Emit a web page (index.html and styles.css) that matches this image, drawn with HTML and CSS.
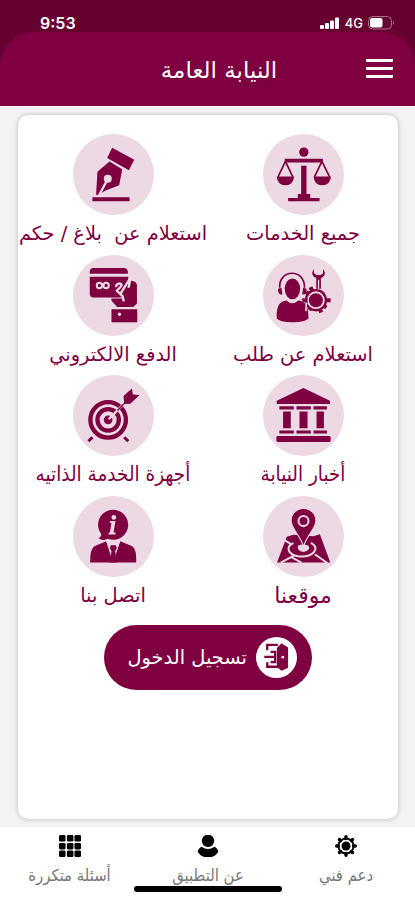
FILE: index.html
```html
<!DOCTYPE html>
<html lang="ar" dir="rtl">
<head>
  <meta charset="UTF-8" />
  <meta name="viewport" content="width=device-width, initial-scale=1.0" />
  <title>النيابة العامة</title>
  <link rel="stylesheet" href="styles.css">
</head>
<body>

<header id="top">
  <div class="status-bar">
    <span class="clock">9:53</span>
    <div class="status-icons">
      <svg width="20" height="13" viewBox="0 0 20 13">
        <rect x="0" y="8" width="4" height="4" rx="1" />
        <rect x="5" y="6" width="4" height="6" rx="1" />
        <rect x="10" y="3.500" width="4" height="8.500" rx="1" />
        <rect x="15" y="0.500" width="4" height="11.500" rx="1" />
      </svg>
      <span class="network">4G</span>
      <svg width="27" height="14" viewBox="0 0 27 14">
        <rect class="battery-case" x="0.500" y="0.500" width="23" height="12.500" rx="4" />
        <rect x="2" y="2" width="12.500" height="9.500" rx="2" />
        <path class="battery-tip" d="M25 4.500q2 2.300 0 4.600z" />
      </svg>
    </div>
  </div>
  <div class="title-bar">
    <div class="hamburger">
      <span></span>
      <span></span>
      <span></span>
    </div>
    <h1>النيابة العامة</h1>
  </div>
</header>

<main>
  <div class="card">
    <div class="services">
      <a class="service">
        <svg class="icon" viewBox="39 27 242 242">
          <circle cx="161" cy="81" r="14" />
          <path d="M104 101h114v11H104z" />
          <path d="M153 122h16v84h11v12h28v10h-94v-10h29v-12h10z" />
          <path class="line" d="M106 109L84 155M106 109L128 155M215 109L193 155M215 109L238 155" />
          <path d="M80 154h52q-2 26-26 26t-26-26zM190 154h52q-2 26-26 26t-26-26z" />
        </svg>
        <span class="label">جميع الخدمات</span>
      </a>
      <a class="service">
        <svg class="icon" viewBox="39 27 242 242">
          <path d="M156 68l66 36-16 31-65-36z" />
          <path d="M148 109l38 23-9 48-40 16-25 14-4-2 4-68z" />
          <path class="cut" d="M142 163l-25 47" />
          <circle class="hole" cx="143" cy="161" r="12" />
          <path d="M97 216h111v12H97z" />
        </svg>
        <span class="label">استعلام عن&nbsp; بلاغ / حكم</span>
      </a>
      <a class="service">
        <svg class="icon" viewBox="39 21 242 242">
          <path class="line" d="M89 119c-4-56 75-60 74 0" />
          <path d="M84 122l10-3 3 20h-6q-5-2-7-9zM169 122l-10-3-3 20h6q5-2 7-9z" />
          <ellipse cx="127" cy="122" rx="23" ry="31" />
          <path d="M109 157q17 16 36 0c21 3 30 15 30 54q-9 11-48 11t-47-11c-1-39 8-51 29-54z" />
          <path d="M190 62l-4 13c0 7 5 13 12 15v32h14V90c8-3 12-9 12-16l-5-12-1 14-7 5h-12l-7-5z" />
          <path class="slot" d="M205 95v27" />
          <path class="teeth" d="M181 117l32 76M157 156h84M177 185l42-54M168 132l60 46" />
          <circle class="hole" cx="197" cy="156" r="29" />
          <circle class="ring" cx="197" cy="156" r="30" />
          <circle cx="197" cy="156" r="21" />
          <path class="gap" d="M158 140l11 19-2 30" />
          <path d="M153 154l19-6v17z" />
        </svg>
        <span class="label">استعلام عن طلب</span>
      </a>
      <a class="service">
        <svg class="icon" viewBox="39 21 242 242">
          <path d="M89 77v-7q1-10 11-10h93q9 1 10 12v5z" />
          <path d="M89 86h115v63q-6 3-17-1H99q-9-1-10-10z" />
          <path d="M154 151h32l27-53q15 1 17 12v56l-11 10h-48l-17-18zM154 183h77v39h-77z" />
          <circle class="symbol" cx="118" cy="112" r="8" />
          <circle class="symbol" cx="138" cy="112" r="8" />
          <path class="finger" d="M168 117c-2-11 17-16 16-4l-14 15 17 16 4 16M182 135l24-39q5 8-2 23" />
          <circle class="hole" cx="178" cy="198" r="5" />
        </svg>
        <span class="label">الدفع الالكتروني</span>
      </a>
      <a class="service">
        <svg class="icon" viewBox="39 21 242 242">
          <path d="M160 60l79 38v10H80V98z" />
          <path d="M88 114h43v10H88zM139 114h43v10h-43zM190 114h40v10h-40zM99 130h23v50H99zM148 130h24v50h-24zM199 130h22v50h-22zM88 187h43v9H88zM139 187h43v9h-43zM190 187h40v9h-40z" />
          <rect x="79" y="203" width="162" height="18" rx="4" />
        </svg>
        <span class="label compact">أخبار النيابة</span>
      </a>
      <a class="service">
        <svg class="icon" viewBox="39 21 242 242">
          <circle class="target" cx="144" cy="155" r="53" />
          <circle class="target" cx="144" cy="155" r="32" />
          <circle cx="144" cy="155" r="13" />
          <path class="cut" d="M146 153l39-40" />
          <path class="shaft" d="M172 127l24-25" />
          <path d="M190 84l25-23 3 18 20 2-28 26-18 1z" />
          <path class="leg" d="M97 207l-12 12M192 207l12 12" />
        </svg>
        <span class="label compact">أجهزة الخدمة الذاتيه</span>
      </a>
      <a class="service">
        <svg class="icon" viewBox="39 16 242 242">
          <path d="M110 138l20-6 60 4 19-6 31 85H81z" />
          <path class="route" d="M92 215l38-20M130 157c-24 10-18 34 14 39 42 5 70-24 38-40M122 198l32 17M194 190l38 27M103 148l20 12" />
          <path class="hole" d="M143 165q15-8 32 0 8 14-15 18-20-2-17-18z" />
          <path class="pin" d="M160 167c-8-30-37-55-37-77a37 37 0 0 1 74 0c0 22-29 47-37 77z" />
          <circle class="pin-ring" cx="160" cy="91" r="15" />
        </svg>
        <span class="label wide">موقعنا</span>
      </a>
      <a class="service">
        <svg class="icon" viewBox="39 16 242 242">
          <path d="M115 142c6-3 9-6 8-13a45 45 0 1 1 20 15c-9 5-18 4-28-2z" />
          <path class="hole" d="M151 91h15l-6 34h6v6h-21v-5h4l5-29h-6z" />
          <circle class="hole" cx="161" cy="80" r="7" />
          <path d="M138 151l-35 15q-13 7-13 49h138q1-42-12-49l-36-15-20 60z" />
          <path class="hole" d="M138 150l20 65 22-65-20 8z" />
          <path d="M152 163h15l3 9-5 8 5 35h-21l5-35-5-8z" />
        </svg>
        <span class="label">اتصل بنا</span>
      </a>
    </div>

    <a class="login">
      <svg class="door" viewBox="0 0 124 124">
        <circle class="disc" cx="62" cy="62" r="62" />
        <path d="M63 33l14-14 20 13v61l-20 9-14-11z" />
        <path class="frame" d="M66 24H34v16M34 76v14h32M25 60h32M44 45h14v31H44" />
        <circle class="knob" cx="81" cy="61" r="4" />
      </svg>
      <span>تسجيل الدخول</span>
    </a>
  </div>
</main>

<nav>
  <a class="tab">
    <svg width="22" height="22" viewBox="0 0 64 64">
      <circle class="gear" cx="32" cy="32" r="22" />
      <circle cx="32" cy="32" r="13" />
      <path class="spikes" d="M32 5v5M32 54v5M5 32h5M54 32h5M13 13l3 3M48 48l3 3M51 13l-3 3M16 48l-3 3" />
    </svg>
    <span>دعم فني</span>
  </a>
  <a class="tab">
    <svg width="22" height="22" viewBox="0 0 64 64">
      <circle cx="32" cy="17" r="18" />
      <path d="M13 34q19 13 38 0 10 5 11 15-8 16-30 16T2 49q1-10 11-15z" />
    </svg>
    <span>عن التطبيق</span>
  </a>
  <a class="tab">
    <svg width="22" height="22" viewBox="0 0 64 64">
      <rect x="0" y="0" width="19" height="19" rx="4" />
      <rect x="23" y="0" width="19" height="19" rx="4" />
      <rect x="45" y="0" width="19" height="19" rx="4" />
      <rect x="0" y="23" width="19" height="19" rx="4" />
      <rect x="23" y="23" width="19" height="19" rx="4" />
      <rect x="45" y="23" width="19" height="19" rx="4" />
      <rect x="0" y="45" width="19" height="19" rx="4" />
      <rect x="23" y="45" width="19" height="19" rx="4" />
      <rect x="45" y="45" width="19" height="19" rx="4" />
    </svg>
    <span>أسئلة متكررة</span>
  </a>
  <div class="home-line"></div>
</nav>

</body>
</html>
```
FILE: styles.css
```css
* {
  box-sizing: border-box;
}

body {
  margin: 0;
  height: 900px;
  display: flex;
  flex-direction: column;
  overflow: hidden;
  background: #f3f3f3;
  color: #7e0040;
  font-family: "DejaVu Sans", sans-serif;
}

#top {
  height: 106px;
  background: #650030;
  color: white;
}

.status-bar {
  direction: ltr;
  height: 32px;
  padding: 7px 20px 0 40px;
  display: flex;
  justify-content: space-between;
  font-family: Inter, sans-serif;
}

.clock {
  font-size: 16px;
  line-height: 33px;
  height: 25px;
  font-weight: 600;
}

.status-icons {
  display: flex;
  align-items: center;
  gap: 5px;
  height: 18px;
  margin-top: 7px;
  fill: white;
}

.network {
  font-size: 13px;
  font-weight: 500;
}

.battery-case {
  fill: none;
  stroke: #a96f8d;
}

.battery-tip {
  fill: #a96f8d;
}

.title-bar {
  height: 74px;
  display: flex;
  background: #7e0040;
  border-radius: 34px 34px 0 0;
}

.hamburger {
  display: flex;
  flex-direction: column;
  gap: 5px;
  padding: 27px 22px 0 0;
  width: 49px;
}

.hamburger span {
  height: 3px;
  width: 27px;
  background: white;
}

h1 {
  flex: 1;
  margin: 0;
  padding-left: 72px;
  text-align: center;
  font-size: 23px;
  font-weight: normal;
  line-height: 77px;
}

main {
  height: 721px;
  padding: 9px 17px 8px 18px;
}

.card {
  height: 704px;
  background: white;
  border-radius: 10px;
  box-shadow: 0 0 5px rgba(0, 0, 0, 0.25);
  display: flex;
  flex-direction: column;
  align-items: center;
  padding-top: 19px;
}

.services {
  width: 380px;
  display: grid;
  grid-template-columns: 190px 190px;
  grid-auto-rows: 120.5px;
}

.service {
  display: flex;
  flex-direction: column;
  align-items: center;
}

.icon {
  width: 81px;
  height: 81px;
  border-radius: 50%;
  background: #ecd9e3;
  fill: #7e0040;
}

.label {
  font-size: 19.4px;
  line-height: 37px;
  white-space: nowrap;
}

.label.compact {
  font-family: "DejaVu Sans Condensed", "DejaVu Sans", sans-serif;
  font-stretch: condensed;
  font-size: 20.5px;
}

.label.wide {
  font-size: 22px;
}

.line, .cut, .ring, .teeth, .slot, .gap, .symbol, .finger,
.target, .shaft, .leg, .route, .pin-ring, .frame, .gear, .spikes {
  fill: none;
  stroke: #7e0040;
}

.line {
  stroke-width: 5;
}

.cut {
  stroke: #ecd9e3;
  stroke-width: 7;
}

.hole {
  fill: #ecd9e3;
}

.slot {
  stroke: #ecd9e3;
  stroke-width: 4;
}

.gap {
  stroke: #ecd9e3;
  stroke-width: 5;
}

.teeth {
  stroke-width: 12;
}

.ring {
  stroke-width: 7;
}

.symbol {
  stroke: #ecd9e3;
  stroke-width: 6;
}

.finger {
  stroke: #ecd9e3;
  stroke-width: 7;
}

.target {
  stroke-width: 13;
}

.shaft {
  stroke-width: 4;
}

.leg {
  stroke-width: 9;
}

.route {
  stroke: #ecd9e3;
  stroke-width: 6;
}

.pin {
  stroke: #ecd9e3;
  stroke-width: 3;
}

.pin-ring {
  stroke: #ecd9e3;
  stroke-width: 6;
}

.login {
  width: 208px;
  height: 65px;
  margin-top: 9px;
  padding-right: 15px;
  display: flex;
  align-items: center;
  gap: 9px;
  border-radius: 33px;
  background: #7e0040;
  color: white;
  font-size: 19.4px;
  white-space: nowrap;
}

.door {
  width: 41px;
  height: 41px;
  flex: none;
  fill: #7e0040;
}

.disc, .knob {
  fill: white;
}

.frame {
  stroke-width: 7;
}

nav {
  position: relative;
  height: 73px;
  padding: 8px 0 0;
  display: grid;
  grid-template-columns: 138px 138px 139px;
  background: white;
  color: #777;
}

.tab {
  display: flex;
  flex-direction: column;
  align-items: center;
  font-family: "DejaVu Sans Condensed", "DejaVu Sans", sans-serif;
  font-stretch: condensed;
  font-size: 16.5px;
  line-height: 37px;
}

.gear {
  stroke: black;
  stroke-width: 6;
}

.spikes {
  stroke: black;
  stroke-width: 10;
  stroke-linecap: round;
}

/* iPhone home indicator, drawn over the tabs */
.home-line {
  position: absolute;
  left: 134px;
  bottom: 8px;
  width: 148px;
  height: 6px;
  border-radius: 3px;
  background: black;
}
```
